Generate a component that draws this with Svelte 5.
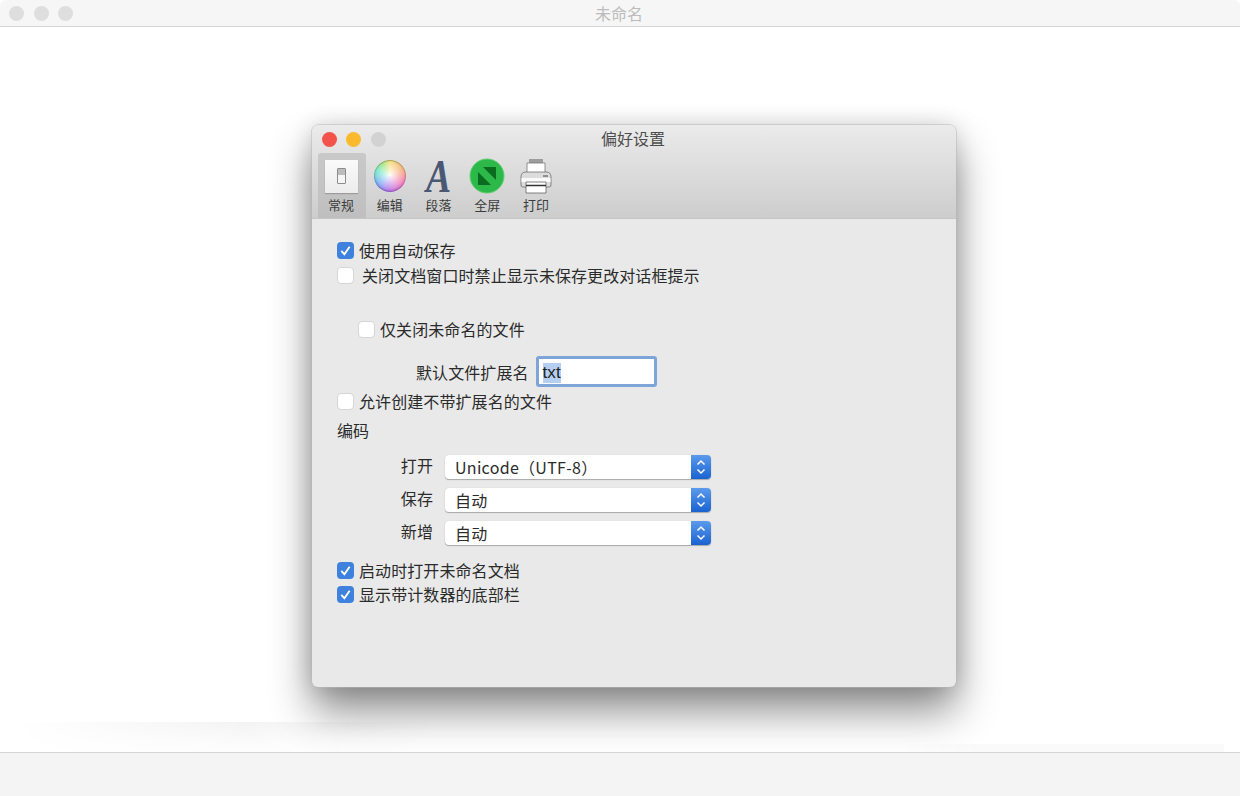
<script>
  const tabs = ['常规', '编辑', '段落', '全屏', '打印'];
  const selects = [
    { label: '打开', value: 'Unicode（UTF-8）' },
    { label: '保存', value: '自动' },
    { label: '新增', value: '自动' }
  ];
</script>

{#snippet check(on)}
  <span class="box" class:on>
    {#if on}
      <svg viewBox="0 0 18 18" width="17" height="17"><path d="M4.6 9.4 L7.8 13 L13.4 5" fill="none" stroke="#fff" stroke-width="2" /></svg>
    {/if}
  </span>
{/snippet}

<div class="app">
  <header class="topbar">
    <div class="lights"><i></i><i></i><i></i></div>
    <div class="toptitle">未命名</div>
  </header>

  <main class="canvas">
    <div class="streak left"></div>
    <div class="streak right"></div>

    <section class="dialog">
      <div class="head">
        <div class="titlerow">
          <span class="dot red"></span>
          <span class="dot yellow"></span>
          <span class="dot off"></span>
          <span class="title">偏好设置</span>
        </div>
        <div class="toolbar">
          {#each tabs as tab, i}
            <div class="tab" class:active={i === 0}>
              <div class="icon">
                {#if i === 0}
                  <div class="general"><span class="switch"><span></span></span></div>
                {:else if i === 1}
                  <div class="wheel"></div>
                {:else if i === 2}
                  <svg class="glyph" viewBox="0 0 36 36" width="36" height="36">
                    <text class="letter" x="22" y="34" text-anchor="middle" transform="scale(0.8 1)">A</text>
                  </svg>
                {:else if i === 3}
                  <svg viewBox="0 0 36 36" width="36" height="36">
                    <circle cx="18" cy="18" r="17" fill="#2db84a" stroke="#5fce72" stroke-width="1" />
                    <rect x="9" y="9" width="18" height="18" fill="#0b6b1f" />
                    <path d="M9 9 H14 L27 22 V27 H22 L9 14 Z" fill="#2db84a" />
                  </svg>
                {:else}
                  <svg viewBox="0 0 36 36" width="36" height="36">
                    <path d="M11 1 H25 V6 H11 Z" fill="#9d9d9d" />
                    <path d="M9 5 H27 V16 H9 Z" fill="#fff" stroke="#777" stroke-width=".8" />
                    <path d="M3 19 Q3 14 8 14 H28 Q33 14 33 19 V27 Q33 29 31 29 H5 Q3 29 3 27 Z" fill="#dcdcdc" stroke="#6f6f6f" stroke-width=".8" />
                    <path d="M3.5 20 H32.5 V24 H3.5 Z" fill="#fafafa" />
                    <path d="M8 24 H28 V35 H8 Z" fill="#fff" stroke="#666" stroke-width=".8" />
                    <path d="M8 27.5 H28" stroke="#333" stroke-width="1.4" />
                    <path d="M25 18 H30" stroke="#444" stroke-width="1.2" />
                  </svg>
                {/if}
              </div>
              <div class="tablabel">{tab}</div>
            </div>
          {/each}
        </div>
      </div>

      <div class="body">
        <label class="row r1">{@render check(true)}<span>使用自动保存</span></label>
        <label class="row r2">{@render check(false)}<span class="wide">关闭文档窗口时禁止显示未保存更改对话框提示</span></label>
        <label class="row r3">{@render check(false)}<span>仅关闭未命名的文件</span></label>
        <div class="extrow">
          <span>默认文件扩展名</span>
          <div class="field"><span class="sel">txt</span></div>
        </div>
        <label class="row r5">{@render check(false)}<span>允许创建不带扩展名的文件</span></label>
        <div class="heading">编码</div>
        <div class="selects">
          {#each selects as s}
            <div class="selrow">
              <span class="sellabel">{s.label}</span>
              <div class="select">
                <span class="value">{s.value}</span>
                <span class="arrows">
                  <svg viewBox="0 0 20 24" width="20" height="24"><path d="M6.5 9.5 L10 6 L13.5 9.5 M6.5 14.5 L10 18 L13.5 14.5" fill="none" stroke="#fff" stroke-width="1.5" /></svg>
                </span>
              </div>
            </div>
          {/each}
        </div>
        <label class="row r6">{@render check(true)}<span>启动时打开未命名文档</span></label>
        <label class="row r7">{@render check(true)}<span>显示带计数器的底部栏</span></label>
      </div>
    </section>
  </main>

  <footer class="bottombar"></footer>
</div>

<style>
  :global(body) {
    margin: 0;
    background: #fff;
  }
  .app {
    width: 1240px;
    height: 796px;
    display: flex;
    flex-direction: column;
    overflow: hidden;
    font-family: "Noto Sans CJK SC", "Liberation Sans", sans-serif;
    font-size: 16px;
    color: #2b2b2b;
  }
  .topbar {
    height: 26px;
    flex: none;
    background: #f6f6f6;
    border-bottom: 1px solid #d6d6d6;
    border-radius: 6px 6px 0 0;
    display: flex;
    align-items: center;
    justify-content: center;
    position: relative;
  }
  .lights {
    position: absolute;
    left: 9px;
    top: 6px;
    display: flex;
    gap: 9.5px;
  }
  .lights i {
    width: 15px;
    height: 15px;
    border-radius: 50%;
    background: #dedede;
  }
  .toptitle {
    color: #bcbcbc;
    line-height: 26px;
    margin-left: -2px;
  }
  .canvas {
    flex: 1;
    position: relative;
    overflow: hidden;
    background: #fff;
    padding: 98px 0 0 312px;
  }
  .streak {
    position: absolute;
    bottom: 0;
  }
  .streak.left {
    left: 15px;
    width: 420px;
    height: 30px;
    background: linear-gradient(#f3f3f3, #fbfbfb 70%, #fdfdfd);
    mask-image: linear-gradient(90deg, transparent, #000 55%, transparent);
  }
  .streak.right {
    left: 900px;
    width: 324px;
    height: 8px;
    background: #fafafa;
    mask-image: linear-gradient(90deg, transparent, #000 25%);
  }
  .dialog {
    position: relative;
    width: 644px;
    height: 562px;
    border-radius: 6px;
    background: #e9e9e9;
    box-shadow: 0 0 0 0.5px #b8b8b8, 0 24px 42px rgba(0, 0, 0, 0.45), 0 0 22px rgba(0, 0, 0, 0.14);
    overflow: hidden;
  }
  .head {
    height: 94px;
    box-sizing: border-box;
    background: linear-gradient(#ebebeb, #e2e2e2 30%, #cdcdcd);
    border-bottom: 1px solid #c6c6c6;
  }
  .titlerow {
    height: 28px;
    display: flex;
    align-items: center;
    justify-content: center;
    position: relative;
    color: #4d4d4d;
  }
  .title {
    position: relative;
    top: -1px;
    left: -1px;
  }
  .dot {
    position: absolute;
    top: 6.5px;
    width: 15px;
    height: 15px;
    border-radius: 50%;
  }
  .dot.red { left: 9.5px; background: #f4534c; }
  .dot.yellow { left: 33.5px; background: #fbb92e; }
  .dot.off { left: 58.5px; background: #d2d2d2; }
  .toolbar {
    display: flex;
    gap: 0.75px;
    padding-left: 6px;
    height: 65px;
  }
  .tab {
    width: 48px;
    box-sizing: border-box;
    padding-right: 2px;
    display: flex;
    flex-direction: column;
    align-items: center;
  }
  .tab.active {
    background: linear-gradient(#c9c9c9, #bfbfbf);
    border-radius: 3px 3px 0 0;
  }
  .icon {
    height: 40px;
    display: flex;
    align-items: center;
    justify-content: center;
    margin-top: 3px;
  }
  .tablabel {
    font-size: 13px;
    line-height: 18px;
    color: #3c3c3c;
  }
  .general {
    width: 33px;
    height: 33px;
    background: linear-gradient(#fafafa, #ececec);
    box-shadow: 0 1px 1px #9c9c9c;
    display: flex;
    align-items: center;
    justify-content: center;
  }
  .switch {
    width: 9px;
    height: 16px;
    box-sizing: border-box;
    border: 1px solid #8c8c8c;
    border-radius: 1px;
    background: #f6f6f6;
    display: block;
  }
  .switch span {
    display: block;
    height: 6px;
    background: #bdbdbd;
  }
  .wheel {
    width: 32px;
    height: 32px;
    border-radius: 50%;
    background:
      radial-gradient(circle at 50% 48%, rgba(255, 255, 255, 0.95), rgba(255, 255, 255, 0.25) 62%, rgba(255, 255, 255, 0) 75%),
      conic-gradient(#f9d35a, #f59a5a 60deg, #f060a8 120deg, #a660e8 190deg, #5aa0f0 240deg, #50e0c0 290deg, #8ce060 330deg, #f9d35a);
    box-shadow: inset 0 -1px 2px rgba(90, 40, 140, 0.5), inset 0 1px 1px rgba(80, 120, 40, 0.5);
  }
  .glyph {
    overflow: visible;
  }
  .letter {
    font-family: "Liberation Serif", serif;
    font-style: italic;
    font-weight: 700;
    font-size: 47px;
    fill: #4a5874;
  }
  .body {
    padding-left: 24px;
    padding-top: 19px;
    letter-spacing: 0.08px;
  }
  .row {
    display: flex;
    align-items: center;
    height: 24px;
    gap: 5px;
  }
  .r2 { margin-top: 1px; }
  .r3 { margin-top: 30px; padding-left: 21px; }
  .r5 { margin-top: 2px; }
  .r6 { margin-top: 13px; }
  .wide { margin-left: 3px; }
  .box {
    width: 17px;
    height: 17px;
    margin-left: 1px;
    flex: none;
    box-sizing: border-box;
    border-radius: 4px;
    background: #fff;
    border: 1px solid #d6d6d6;
    display: block;
  }
  .box.on {
    background: #3f82de;
    border: none;
  }
  .box svg { display: block; }
  .extrow {
    display: flex;
    align-items: center;
    height: 31px;
    margin-top: 15px;
    padding-left: 80px;
    gap: 7px;
  }
  .field {
    width: 121px;
    flex: none;
    height: 31px;
    box-sizing: border-box;
    border: 3px solid #7fa4d8;
    border-radius: 3px;
    background: #fff;
    padding-left: 4px;
    padding-top: 3px;
    display: flex;
    align-items: center;
  }
  .sel {
    background: #b4cff2;
    color: #1d1d1d;
    font-family: "Liberation Sans", sans-serif;
    font-size: 17px;
    line-height: 20px;
  }
  .heading {
    margin-top: 5px;
    padding-left: 1px;
    height: 24px;
    line-height: 24px;
  }
  .selects {
    display: flex;
    flex-direction: column;
    gap: 9px;
    margin-top: 13px;
  }
  .selrow {
    display: flex;
    align-items: center;
    height: 24px;
  }
  .sellabel {
    width: 97px;
    text-align: right;
    margin-right: 12px;
    position: relative;
    top: -2px;
  }
  .select {
    width: 266px;
    height: 24px;
    background: #fff;
    border-radius: 4px;
    box-shadow: 0 1px 1px #a8a8a8, 0 0 1px #c0c0c0;
    display: flex;
    justify-content: space-between;
    overflow: hidden;
  }
  .value {
    padding-left: 10px;
    line-height: 25px;
    letter-spacing: 0.3px;
  }
  .arrows {
    width: 20px;
    height: 24px;
    background: linear-gradient(#5b9bec, #1a63d0);
    display: block;
  }
  .arrows svg { display: block; }
  .bottombar {
    height: 43px;
    flex: none;
    background: #f4f4f4;
    border-top: 1px solid #d4d4d4;
    position: relative;
  }
</style>
